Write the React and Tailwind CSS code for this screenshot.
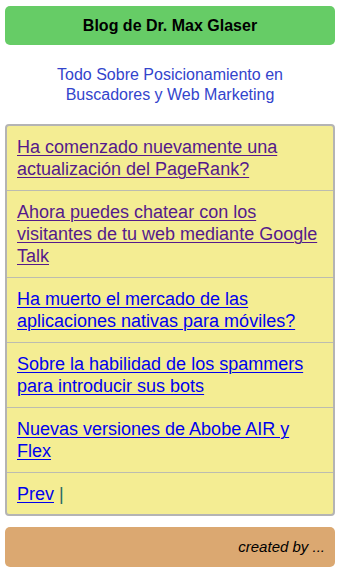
export default function App() {
  const items = [
    { t: "Ha comenzado nuevamente una actualización del PageRank?", v: true },
    { t: "Ahora puedes chatear con los visitantes de tu web mediante Google Talk", v: true },
    { t: "Ha muerto el mercado de las aplicaciones nativas para móviles?", v: false },
    { t: "Sobre la habilidad de los spammers para introducir sus bots", v: false },
    { t: "Nuevas versiones de Abobe AIR y Flex", v: false },
  ];
  return (
    <div className="w-[340px] min-h-[574px] bg-white px-[5px] pt-[6px] font-['Liberation_Sans',Arial,sans-serif]">
      <div className="h-[39px] rounded-[5px] bg-[#66cc66] flex items-center justify-center text-[16px] font-bold text-black">
        Blog de Dr. Max Glaser
      </div>
      <div className="mt-[20px] text-center text-[16px] leading-[20px] text-[#3344cc]">
        Todo Sobre Posicionamiento en
        <br />
        Buscadores y Web Marketing
      </div>
      <div className="mt-[19px] border-2 border-[#b4b4b4] rounded-[4px] bg-[#f4ed93]">
        {items.map((it, i) => (
          <div key={i} className="border-b border-[#bcbcb0] pl-[10px] pr-[8px] py-[10px] text-[18px] leading-[22px]">
            <a href="#" className={"underline decoration-1 underline-offset-2 " + (it.v ? "text-[#551a8b]" : "text-[#0000ee]")}>
              {it.t}
            </a>
          </div>
        ))}
        <div className="px-[10px] pt-[10px] pb-[9px] text-[18px] leading-[22px] text-[#226666]">
          <a href="#" className="underline decoration-1 underline-offset-2 text-[#0000ee]">Prev</a> |
        </div>
      </div>
      <div className="mt-[11px] h-[40px] rounded-[5px] bg-[#dba871] flex items-center justify-end pr-[10px] text-[15px] italic text-black">
        created by ...
      </div>
    </div>
  );
}
